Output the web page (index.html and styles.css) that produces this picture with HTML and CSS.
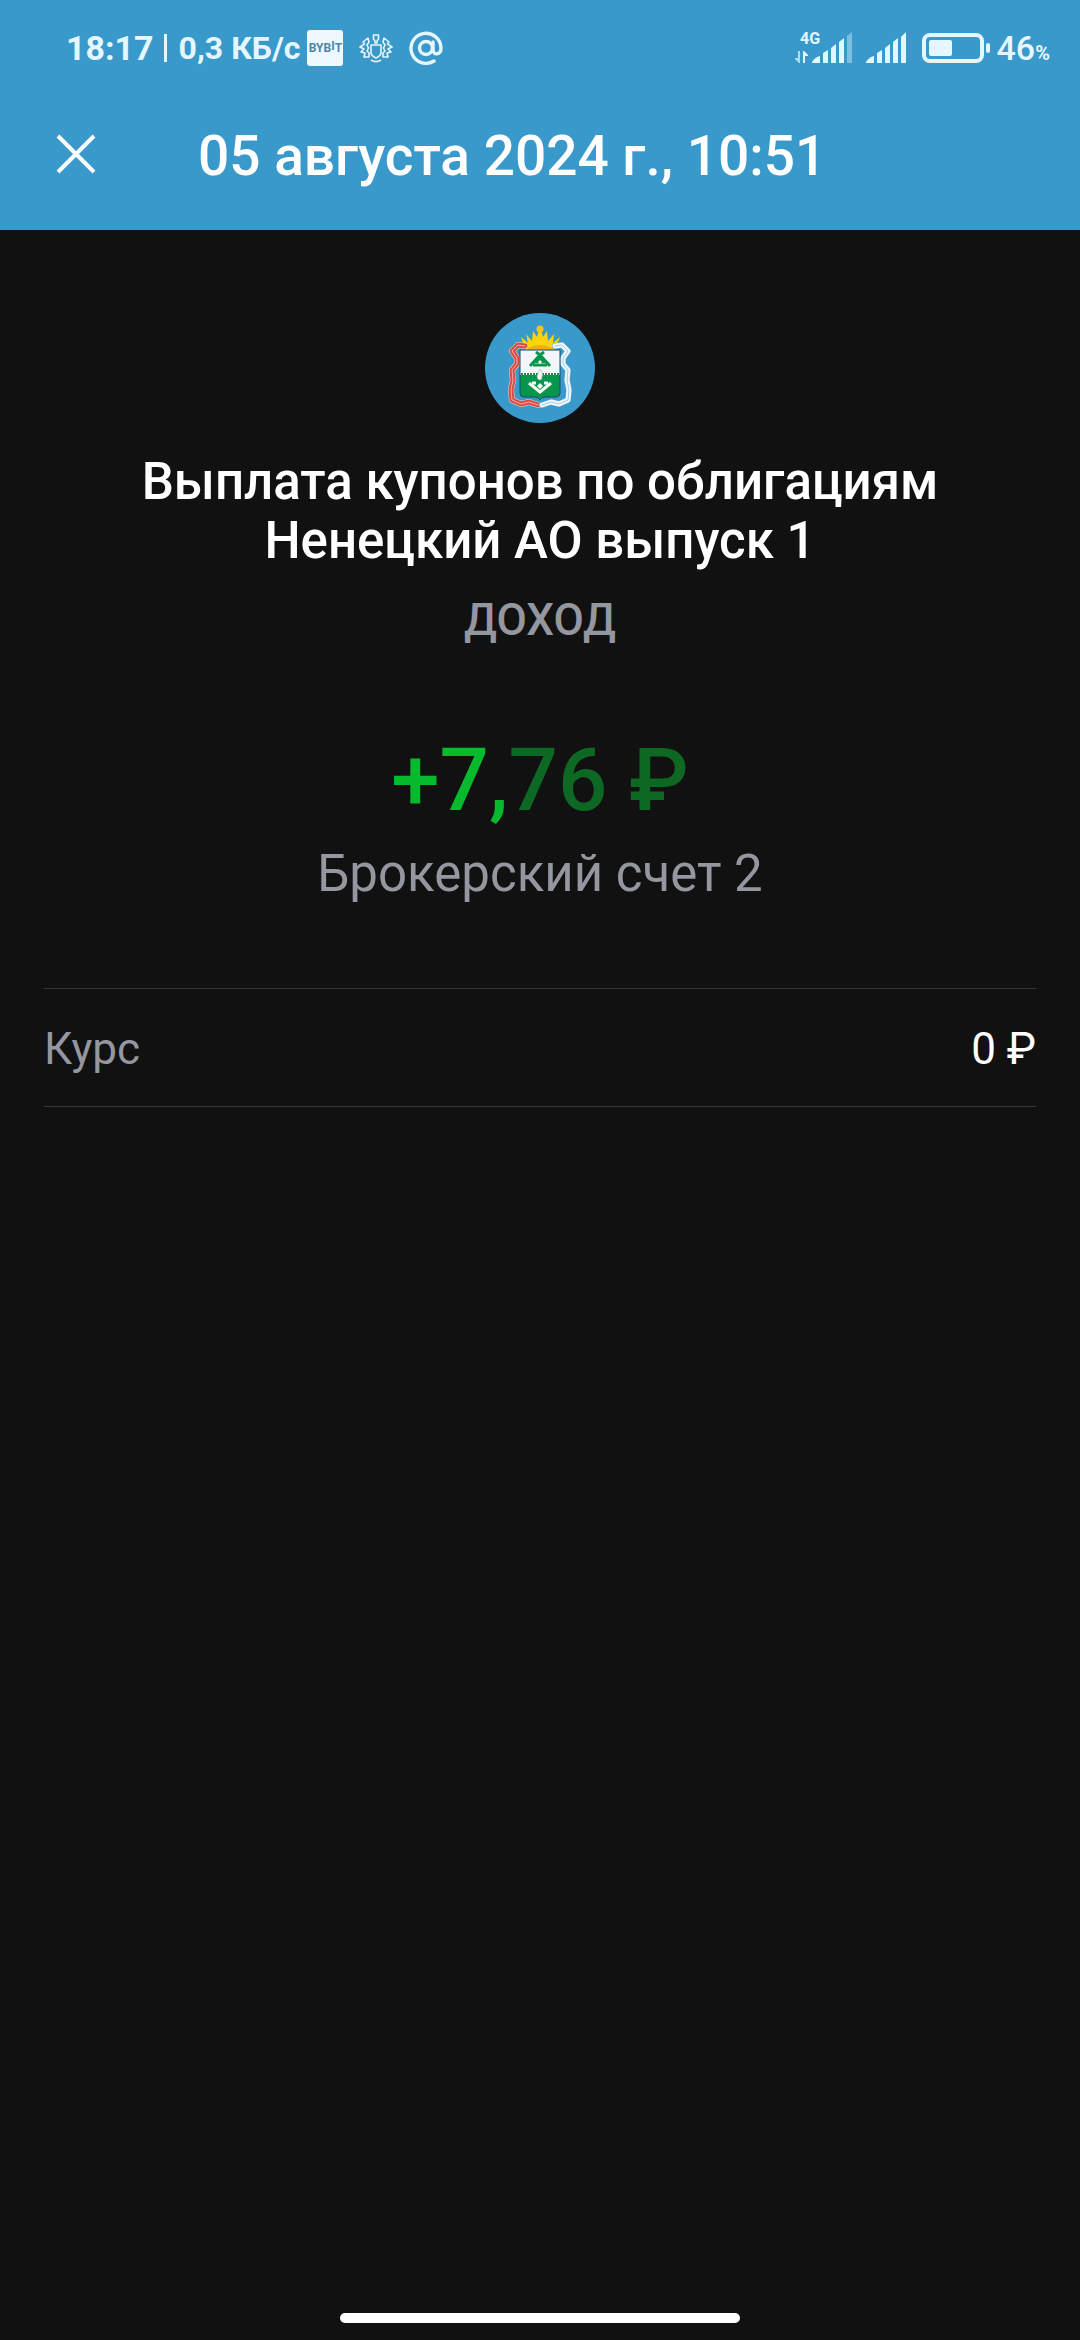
FILE: index.html
```html
<!DOCTYPE html>
<html lang="ru">
<head>
  <meta charset="UTF-8">
  <meta name="viewport" content="width=device-width, initial-scale=1.0">
  <title>Выплата купонов</title>
  <link rel="stylesheet" href="styles.css">
</head>
<body>
  <header class="header">
    <div class="status">
      <div class="status-left">
        <span class="clock">18:17</span>
        <span class="divider"></span>
        <span class="speed">0,3 КБ/с</span>
        <span class="bybit">BYB<sup>I</sup>T</span>
        <svg class="icon-emblem" viewBox="0 0 34 30" fill="none" stroke="currentColor" stroke-width="1.6" stroke-linejoin="round" aria-hidden="true">
          <path d="M14.5 2h5v4L18 8v2h-2V8l-1.5-2zM12 12h10v8c0 2.5-3 4-5 5-2-1-5-2.5-5-5z"/>
          <path d="M9 5L4 9l1.5 2L1 14l4 2-3 3 4 1-1 4h5v-4L8 18l1.5-3L8 12l2-3zM25 5l5 4-1.5 2 4.5 3-4 2 3 3-4 1 1 4h-5v-4l2-2-1.5-3 1.5-3-2-3zM12 27c3 2 7 2 10 0"/>
        </svg>
        <svg class="icon-at" viewBox="0 0 34 34" fill="none" stroke="currentColor" stroke-width="3.4" stroke-linecap="round" aria-hidden="true">
          <circle cx="17" cy="17" r="6.5"/>
          <path d="M24 11v8c0 5.5 8 5.5 8-2A15 15 0 1 0 25 30"/>
        </svg>
      </div>
      <div class="status-right">
        <svg class="icon-mobile" viewBox="0 0 58 40" fill="currentColor" aria-hidden="true">
          <text class="network" x="5" y="16">4G</text>
          <path opacity=".7" d="M5 23v12h-1l-4-4v-1h3v-7z"/>
          <path d="M8 35V23h1l4 4v1h-3v7z"/>
          <path d="M17 34q3-5 8-6v7h-8zM28 25l5-3v13h-5zM36 20l5-4v19h-5zM44 14l5-4v25h-5z"/>
          <path opacity=".4" d="M52 8l5-4v31h-5z"/>
        </svg>
        <svg class="icon-signal" viewBox="0 0 40 34" fill="currentColor" aria-hidden="true">
          <path d="M0 31q3-5 8-6v7H0zM11 22l5-3v13h-5zM19 17l5-4v19h-5zM27 11l5-4v25h-5zM35 6l5-5v31h-5z"/>
        </svg>
        <svg class="icon-battery" viewBox="0 0 68 30" aria-hidden="true">
          <rect x="2" y="2" width="58" height="26" rx="6" fill="none" stroke="currentColor" stroke-width="4"/>
          <rect x="7" y="7" width="23" height="16" rx="2" fill="currentColor"/>
          <rect x="64" y="10" width="4" height="10" rx="2" fill="currentColor"/>
        </svg>
        <span class="charge">46<small>%</small></span>
      </div>
    </div>
    <div class="toolbar">
      <button class="close" type="button" aria-label="Закрыть">
        <svg viewBox="0 0 40 40" fill="none" stroke="currentColor" stroke-width="4" aria-hidden="true">
          <path d="M2 2l36 36M38 2L2 38"/>
        </svg>
      </button>
      <h1 class="title">05 августа 2024 г., 10:51</h1>
    </div>
  </header>

  <main class="content">
    <svg class="logo" viewBox="0 0 110 110" aria-hidden="true">
      <circle cx="55" cy="55" r="55" fill="#3999ca"/>
      <!-- crown -->
      <path fill="#fbd40c" d="M40 37L36 24l7 6-2-9 6 7 1-10 4 6 2-7h2l2 7 4-6 1 10 6-7-1 9 7-6-5 13q-15-4-30 0z"/>
      <circle cx="55" cy="16" r="3.5" fill="#f3c31a"/>
      <path fill="#f3b20b" d="M40 37q15-10 30 0z"/>
      <!-- ribbons -->
      <g fill="none" stroke-linecap="round" stroke-linejoin="round">
        <path stroke="#f3d8d6" stroke-width="6" d="M40 33l-7-1-6 6 5 7v6l-5 6 1 10-2 10 1 10 9 4 8-2 9 3"/>
        <path stroke="#d94b41" stroke-width="5" d="M40 33l-7-1-6 6 5 7v6l-5 6 1 10-2 10 1 10 9 4 8-2 9 3"/>
        <path stroke="#efb0aa" d="M40 33l-7-1-6 6 5 7v6l-5 6 1 10-2 10 1 10 9 4 8-2 9 3"/>
        <path stroke="#6faad5" stroke-width="6" d="M70 33l7-1 6 6-5 7v6l5 6-1 10 2 10-1 10-9 4-8-2-9 3"/>
        <path stroke="#eef7fc" stroke-width="5" d="M70 33l7-1 6 6-5 7v6l5 6-1 10 2 10-1 10-9 4-8-2-9 3"/>
        <path stroke="#a5cfea" d="M70 33l7-1 6 6-5 7v6l5 6-1 10 2 10-1 10-9 4-8-2-9 3"/>
      </g>
      <!-- shield -->
      <path fill="#f3f5f8" d="M35 37h40v25H35z"/>
      <path fill="#07964b" d="M35 62h40v18q0 4-4 4H61q-5 0-6 3-1-3-6-3H39q-4 0-4-4z"/>
      <path fill="none" stroke="#174c6c" d="M35 37h40v43q0 4-4 4H61q-5 0-6 3-1-3-6-3H39q-4 0-4-4z"/>
      <path fill="none" stroke="#07964b" stroke-width="2" stroke-dasharray="2 1" d="M36 61h38"/>
      <path fill="none" stroke="#07964b" stroke-width="3" d="M51 39l4 3 4-3M45 53l10-11 10 11M48 52h14"/>
      <path fill="#07964b" d="M55 42l8 8H47z"/>
      <path fill="#f3f5f8" d="M55 47l2 2-2 2-2-2z"/>
      <path fill="#f4f7f5" stroke="#9aaba4" stroke-width=".5" d="M55 56q4 4 2 8 0 3-2 3-3 0-3-4 1-3 3-7z"/>
      <path fill="none" stroke="#f4f7f5" stroke-width="3" d="M44 70l11 9 11-9M47 70h4M59 70h4"/>
      <path fill="#f4f7f5" d="M55 70l3 3-3 3-3-3z"/>
    </svg>
    <h2 class="name">Выплата купонов по облигациям Ненецкий АО выпуск 1</h2>
    <p class="kind">ДОХОД</p>
    <p class="amount">+7,<span class="amount-rest">76 ₽</span></p>
    <p class="account">Брокерский счет 2</p>
    <dl class="details">
      <dt>Курс</dt>
      <dd>0 ₽</dd>
    </dl>
  </main>
  <div class="home-bar"></div>
</body>
</html>
```
FILE: styles.css
```css
* {
  box-sizing: border-box;
}
body {
  margin: 0;
  min-height: 100vh;
  display: flex;
  flex-direction: column;
  background: #111;
  color: #fff;
  font-family: Roboto, sans-serif;
}
h1, h2, p, dl, dd {
  margin: 0;
}
svg {
  display: block;
}
.header {
  background: #3999ca;
}

/* status bar */
.status {
  display: flex;
  justify-content: space-between;
  height: 96px;
  padding: 0 30px 0 66px;
  color: #e6f6ff;
}
.status-left, .status-right {
  display: flex;
  align-items: center;
}
.clock {
  font-size: 34px;
  font-weight: 700;
}
.divider {
  width: 3px;
  height: 28px;
  margin: 0 12px 0 10px;
  background: currentColor;
}
.speed {
  font-size: 32px;
  font-weight: 700;
}
.bybit {
  width: 36px;
  height: 36px;
  margin-left: 7px;
  border-radius: 3px;
  background: #eef8fe;
  color: #4c86a8;
  font-size: 12px;
  font-weight: 700;
  line-height: 36px;
  text-align: center;
}
.bybit sup {
  font-size: 12px;
  line-height: 0;
  vertical-align: 2px;
}
.icon-emblem {
  width: 34px;
  height: 30px;
  margin-left: 16px;
}
.icon-at {
  width: 34px;
  height: 34px;
  margin-left: 16px;
}
.icon-mobile {
  width: 58px;
  height: 40px;
  overflow: visible;
}
.network {
  font-size: 16px;
  font-weight: 700;
}
.icon-signal {
  width: 40px;
  height: 34px;
  margin-left: 13px;
}
.icon-battery {
  width: 68px;
  height: 30px;
  margin: 0 7px 0 16px;
}
.charge {
  font-size: 34px;
  font-weight: 500;
}
.charge small {
  font-size: 20px;
  font-weight: 700;
}

/* toolbar */
.toolbar {
  display: flex;
  align-items: center;
  height: 134px;
  padding: 0 56px 18px;
}
.close {
  padding: 0;
  border: 0;
  background: none;
  color: #fff;
  cursor: pointer;
}
.close svg {
  width: 40px;
  height: 40px;
}
.title {
  margin-left: 102px;
  padding-top: 3px;
  font-size: 55px;
  font-weight: 500;
  line-height: 64px;
}

/* operation */
.content {
  flex: 1;
  padding: 83px 44px 0;
  text-align: center;
}
.logo {
  width: 110px;
  height: 110px;
  margin: 0 auto;
}
.name {
  max-width: 860px;
  margin: 29px auto 0;
  font-size: 51px;
  font-weight: 500;
  line-height: 59px;
}
.kind {
  margin-top: 20px;
  color: #9496a0;
  font-size: 44px;
  font-weight: 500;
  line-height: 60px;
}
.amount {
  margin-top: 78px;
  color: #06b92d;
  font-size: 87px;
  font-weight: 500;
  line-height: 104px;
}
.amount-rest {
  color: #0d6823;
}
.account {
  margin-top: 12px;
  color: #9496a0;
  font-size: 51px;
  line-height: 60px;
}
.details {
  display: flex;
  justify-content: space-between;
  margin-top: 84px;
  padding: 34px 0 31px;
  border-top: 1px solid #353535;
  border-bottom: 1px solid #353535;
  font-size: 44px;
  line-height: 52px;
}
.details dt {
  color: #9496a0;
}
.home-bar {
  width: 37%;
  height: 10px;
  margin: 0 auto 17px;
  border-radius: 5px;
  background: #fff;
}
```
